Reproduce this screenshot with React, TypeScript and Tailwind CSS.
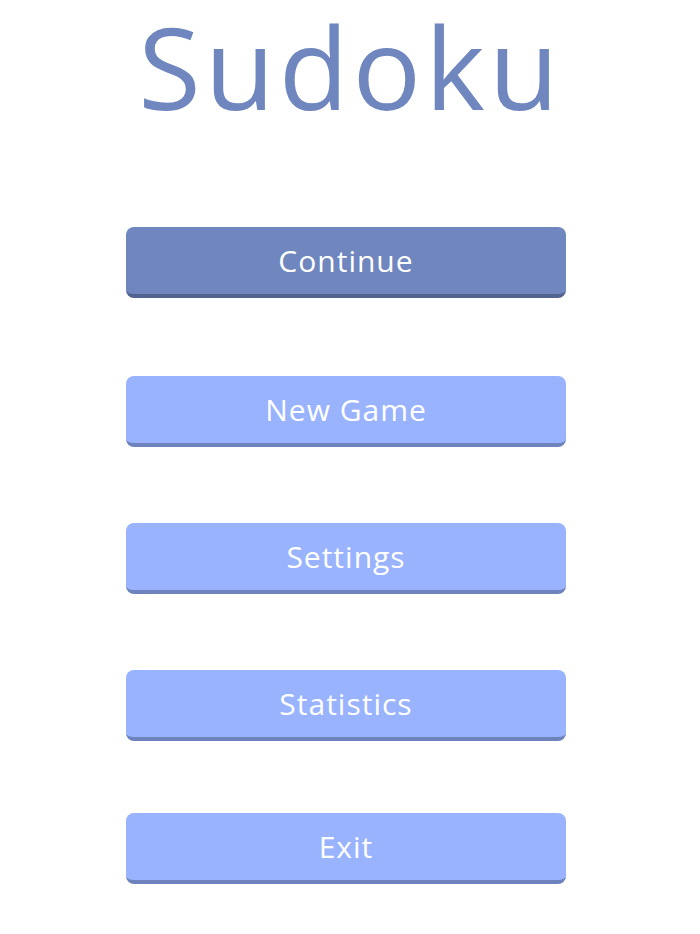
import React from "react";

const items = [
  { label: "Continue", primary: true, mt: "mt-[96px]" },
  { label: "New Game", primary: false, mt: "mt-[78px]" },
  { label: "Settings", primary: false, mt: "mt-[76px]" },
  { label: "Statistics", primary: false, mt: "mt-[76px]" },
  { label: "Exit", primary: false, mt: "mt-[72px]" },
];

export default function App() {
  return (
    <div
      className="w-[700px] h-[934px] bg-white overflow-hidden flex flex-col"
      style={{ fontFamily: '"Open Sans", "Noto Sans", sans-serif' }}
    >
      <h1 className="w-[700px] pl-[1px] text-center text-[114px] leading-[1.15] tracking-[4px] text-[#6f86bf] font-normal">
        Sudoku
      </h1>
      <div className="flex flex-col pl-[126px]">
        {items.map((it) => (
          <button
            key={it.label}
            className={
              it.mt +
              " w-[440px] h-[71px] rounded-[8px] border-b-[4px] flex items-center justify-center text-white text-[30px] tracking-[1px] " +
              (it.primary
                ? "bg-[#6f86bf] border-[#52638f]"
                : "bg-[#99b3ff] border-[#6e82bd]")
            }
          >
            {it.label}
          </button>
        ))}
      </div>
    </div>
  );
}
